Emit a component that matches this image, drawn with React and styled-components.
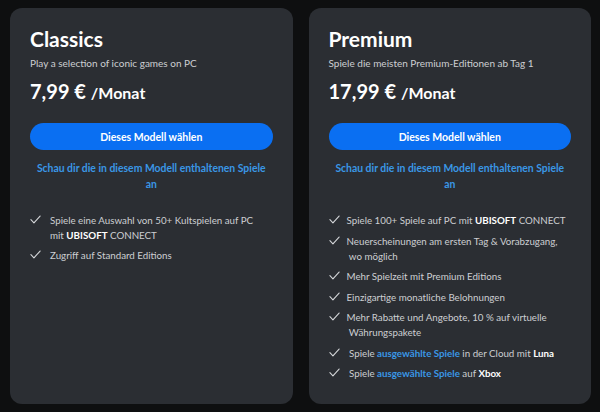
import styled, { createGlobalStyle } from "styled-components"

const GlobalStyle = createGlobalStyle`
  html, body {
    margin: 0;
    padding: 0;
    background: #0e0f10;
  }
  body {
    font-family: "Lato", "Noto Sans", sans-serif;
  }
`

const COLORS = {
  PAGE: "#0e0f10",
  CARD: "#2b2e33",
  TEXT: "#ffffff",
  MUTED: "#cdcfd2",
  BUTTON: "#0a6ff2",
  LINK: "#3a97e6",
}

const Page = styled.div`
  box-sizing: border-box;
  width: 600px;
  height: 412px;
  padding: 8px 9px 8px 10px;
  display: grid;
  grid-template-columns: 1fr 1fr;
  gap: 16px;
  background: ${COLORS.PAGE};
`

const Card = styled.section`
  background: ${COLORS.CARD};
  border-radius: 12px;
  padding: 18px 20px;
  display: flex;
  flex-direction: column;
  overflow: hidden;
`

const Title = styled.h2`
  margin: 0;
  color: ${COLORS.TEXT};
  font-size: 21px;
  line-height: 26px;
  font-weight: 700;
`

const Subtitle = styled.p`
  margin: 4px 0 0;
  color: ${COLORS.MUTED};
  font-size: 10px;
  line-height: 14px;
`

const Price = styled.div`
  margin-top: 9px;
  color: ${COLORS.TEXT};
  font-weight: 700;
  font-size: 20px;
  line-height: 24px;
`

const Period = styled.span`
  font-size: 16px;
`

const Button = styled.button`
  margin-top: 18px;
  height: 27px;
  border: 0;
  border-radius: 14px;
  background: ${COLORS.BUTTON};
  color: #fff;
  font-family: inherit;
  font-weight: 700;
  font-size: 10.5px;
  cursor: pointer;
`

const GamesLink = styled.a`
  margin-top: 10px;
  text-align: center;
  color: ${COLORS.LINK};
  font-weight: 700;
  font-size: 10.4px;
  line-height: 16px;
  text-decoration: none;
`

const List = styled.ul`
  list-style: none;
  margin: 21px 0 0;
  padding: 0;
  display: flex;
  flex-direction: column;
  gap: ${(p) => p.$gap}px;
`

const Item = styled.li`
  display: flex;
  align-items: flex-start;
  gap: ${(p) => p.$gap}px;
  color: ${COLORS.MUTED};
  font-size: 9.75px;
  line-height: 15px;
`

const Check = styled.svg`
  flex: none;
  width: 11px;
  height: 11px;
  margin-top: 1px;
`

const Strong = styled.b`
  color: #fff;
  font-weight: 700;
`

const Accent = styled.b`
  color: ${COLORS.LINK};
  font-weight: 700;
`

function CheckIcon() {
  return (
    <Check viewBox="0 0 12 12" fill="none">
      <path d="M1 6.2L4.3 9.6L11 2.2" stroke="#d4d6d9" strokeWidth="1.2" strokeLinecap="round" strokeLinejoin="round" />
    </Check>
  )
}

function Feature({ children, gap }) {
  return (
    <Item $gap={gap}>
      <CheckIcon />
      <span>{children}</span>
    </Item>
  )
}

function Plan({ title, subtitle, price, children, listGap, iconGap }) {
  return (
    <Card>
      <Title>{title}</Title>
      <Subtitle>{subtitle}</Subtitle>
      <Price>
        {price} <Period>/Monat</Period>
      </Price>
      <Button>Dieses Modell wählen</Button>
      <GamesLink href="#">
        Schau dir die in diesem Modell enthaltenen Spiele
        <br />
        an
      </GamesLink>
      <List $gap={listGap}>
        {children.map((c, i) => (
          <Feature key={i} gap={iconGap}>{c}</Feature>
        ))}
      </List>
    </Card>
  )
}

export default function App() {
  return (
    <>
      <GlobalStyle />
      <Page>
        <Plan title="Classics" subtitle="Play a selection of iconic games on PC" price="7,99 €" listGap={5} iconGap={9}>
          {[
            <>
              Spiele eine Auswahl von 50+ Kultspielen auf PC
              <br />
              mit <Strong>UBISOFT</Strong> CONNECT
            </>,
            <>Zugriff auf Standard Editions</>,
          ]}
        </Plan>
        <Plan title="Premium" subtitle="Spiele die meisten Premium-Editionen ab Tag 1" price="17,99 €" listGap={5.5} iconGap={7}>
          {[
            <>
              Spiele 100+ Spiele auf PC mit <Strong>UBISOFT</Strong>&nbsp;CONNECT
            </>,
            <>
              Neuerscheinungen am ersten Tag &amp; Vorabzugang,
              <br />
              &nbsp;wo möglich
            </>,
            <>Mehr Spielzeit mit Premium Editions</>,
            <>Einzigartige monatliche Belohnungen</>,
            <>
              Mehr Rabatte und Angebote, 10 % auf virtuelle
              <br />
              &nbsp;Währungspakete
            </>,
            <>
              &nbsp;Spiele <Accent>ausgewählte Spiele</Accent> in der Cloud mit <Strong>Luna</Strong>
            </>,
            <>
              &nbsp;Spiele <Accent>ausgewählte Spiele</Accent> auf <Strong>Xbox</Strong>
            </>,
          ]}
        </Plan>
      </Page>
    </>
  )
}
